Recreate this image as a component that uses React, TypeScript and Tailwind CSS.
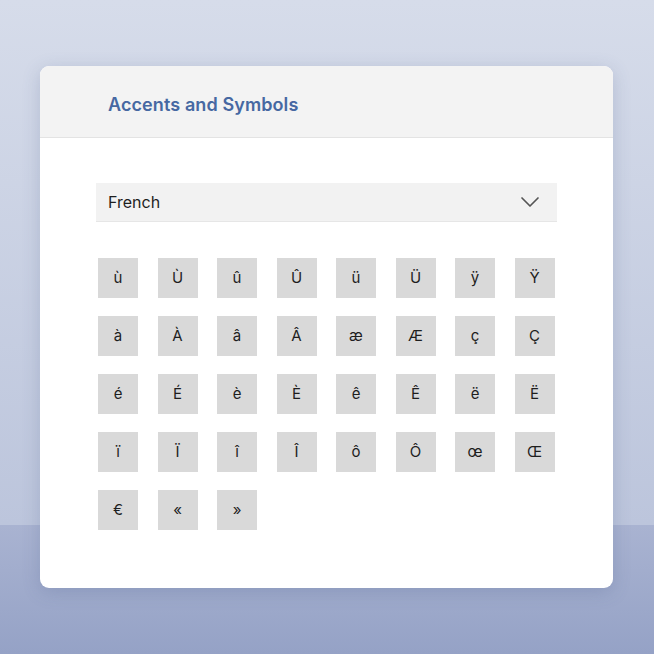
import React, { useState } from 'react';

const rows: string[][] = [
  ['ù', 'Ù', 'û', 'Û', 'ü', 'Ü', 'ÿ', 'Ÿ'],
  ['à', 'À', 'â', 'Â', 'æ', 'Æ', 'ç', 'Ç'],
  ['é', 'É', 'è', 'È', 'ê', 'Ê', 'ë', 'Ë'],
  ['ï', 'Ï', 'î', 'Î', 'ô', 'Ô', 'œ', 'Œ'],
  ['€', '«', '»'],
];

const Chevron: React.FC = () => (
  <svg width="20" height="12" viewBox="0 0 20 12" fill="none">
    <path d="M2 2l8 8 8-8" stroke="#555" strokeWidth="1.7" strokeLinecap="round" strokeLinejoin="round" />
  </svg>
);

const App: React.FC = () => {
  const [lang] = useState('French');

  return (
    <div
      className="w-[654px] h-[654px] pt-[66px] pl-[40px] bg-[linear-gradient(to_bottom,#d6dcea_0%,#bcc5dc_80.2%,#a9b3d1_80.3%,#95a2c6_100%)]"
      style={{ fontFamily: 'Inter, "Noto Sans", sans-serif' }}
    >
      <div className="w-[573px] h-[522px] bg-white rounded-[9px] overflow-hidden shadow-[0_4px_18px_rgba(70,85,130,0.22)]">
        {/* header */}
        <div className="h-[72px] bg-[#f3f3f3] border-b border-[#e3e3e3] flex items-center pl-[68px] pt-[6px]">
          <h1 className="text-[18px] font-semibold text-[#4668a2] tracking-[0.1px]">Accents and Symbols</h1>
        </div>

        <div className="pl-[56px] pt-[45px]">
          {/* language select */}
          <div className="w-[461px] h-[39px] bg-[#f2f2f2] border-b border-[#e6e6e6] flex items-center justify-between pl-[12px] pr-[17px]">
            <span className="text-[16px] text-[#1f1f1f]">{lang}</span>
            <Chevron />
          </div>

          {/* character grid */}
          <div className="mt-[36px] ml-[2px] flex flex-col gap-[18px]">
            {rows.map((row, i) => (
              <div key={i} className="flex gap-[19.5px]">
                {row.map((ch) => (
                  <button
                    key={ch}
                    className="w-[40px] h-[40px] bg-[#d9d9d9] flex items-center justify-center text-[15px] text-[#1e1e1e]"
                  >
                    {ch}
                  </button>
                ))}
              </div>
            ))}
          </div>
        </div>
      </div>
    </div>
  );
};

export default App;
